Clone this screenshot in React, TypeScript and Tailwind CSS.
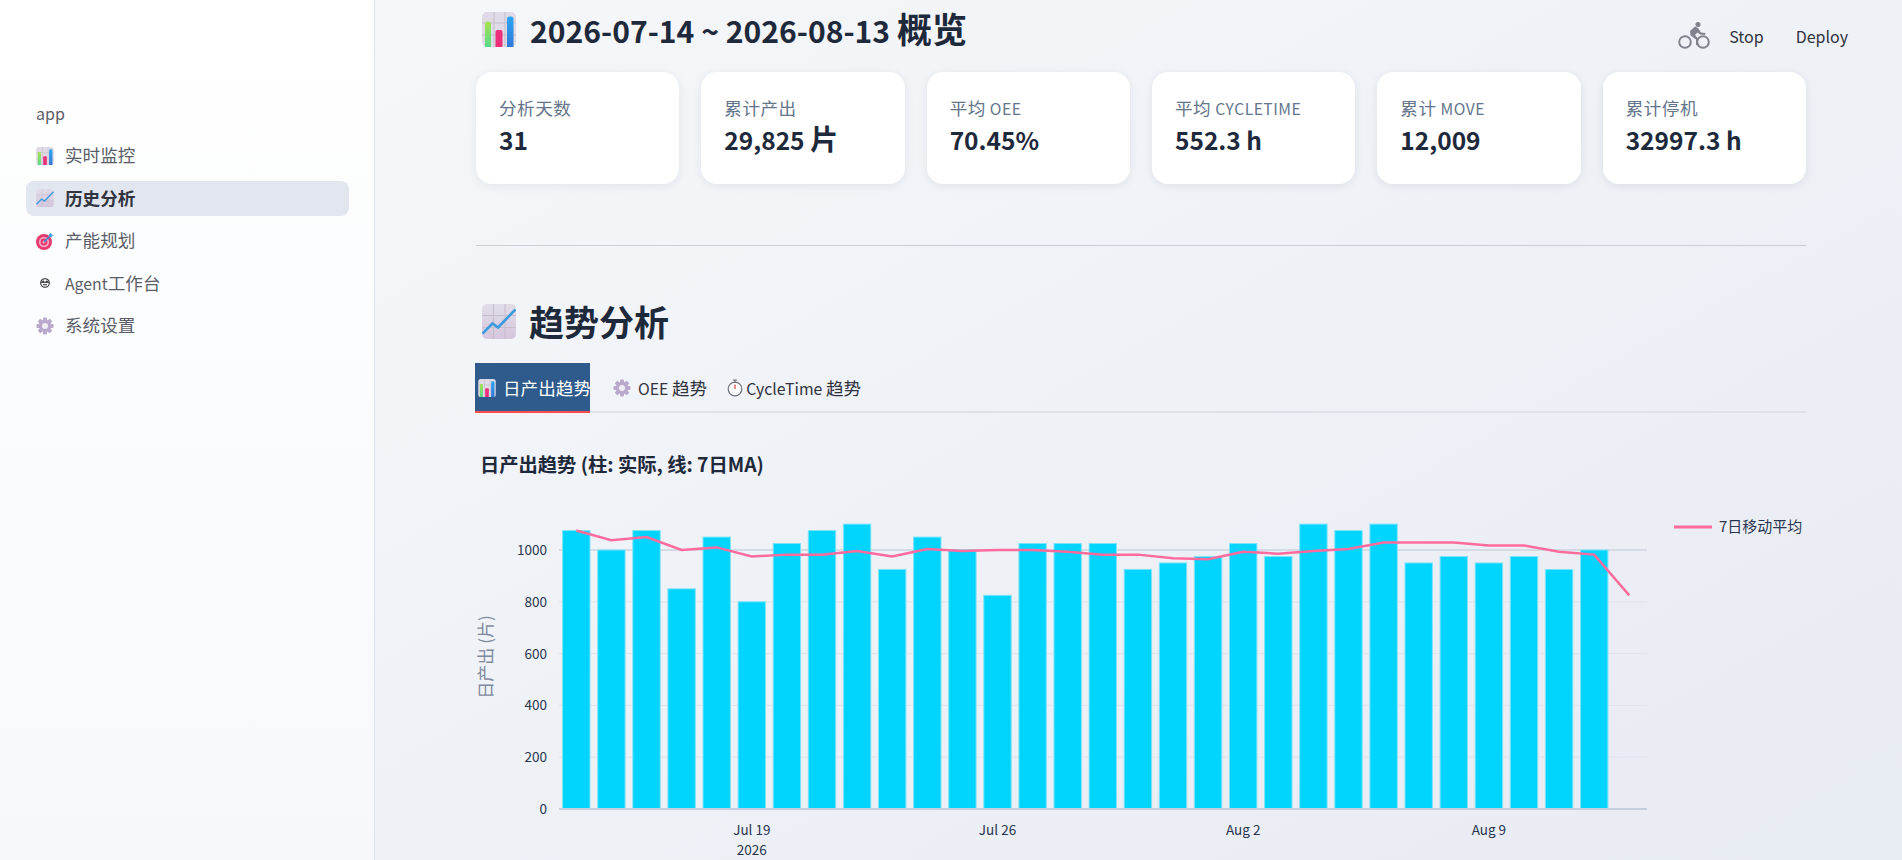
const FONT = "font-['Noto_Sans_CJK_SC','Noto_Sans',sans-serif]";

const output = [
  1075, 1000, 1075, 850, 1050, 800, 1025, 1075, 1100, 925, 1050, 1000, 825, 1025, 1025, 1025, 925, 950, 975, 1025,
  975, 1100, 1075, 1100, 950, 975, 950, 975, 925, 1000, 0,
];

const kpis = [
  { label: "分析天数", value: "31" },
  { label: "累计产出", value: "29,825 片" },
  { label: "平均 OEE", value: "70.45%" },
  { label: "平均 CycleTime", value: "552.3 h" },
  { label: "累计 Move", value: "12,009" },
  { label: "累计停机", value: "32997.3 h" },
];

// latin text runs smaller than the CJK around it
function Mixed({ text, latin = "text-[0.875em]" }: { text: string; latin?: string }) {
  return (
    <>
      {text.split(/([\u4e00-\u9fff]+)/).map((part, i) =>
        /[\u4e00-\u9fff]/.test(part) ? (
          <span key={i}>{part}</span>
        ) : (
          <span key={i} className={latin}>
            {part}
          </span>
        )
      )}
    </>
  );
}

function ChartEmoji({ className }: { className: string }) {
  return (
    <svg viewBox="0 0 34 35" className={className}>
      <defs>
        <linearGradient id="g-green" x1="0" y1="0" x2="0" y2="1">
          <stop offset="0" stopColor="#a8e24e" />
          <stop offset="1" stopColor="#58d98a" />
        </linearGradient>
        <linearGradient id="g-blue" x1="0" y1="0" x2="0" y2="1">
          <stop offset="0" stopColor="#2ba6f2" />
          <stop offset="1" stopColor="#3178d6" />
        </linearGradient>
      </defs>
      <rect width="34" height="35" rx="5" fill="#dfdae5" />
      <path d="M12 0v35M23 0v35M0 11h34M0 23h34" stroke="#c4bfca" strokeWidth="1" />
      <path d="M3 35V12q0-2.500 2.500-2.500h1q2.500 0 2.500 2.500v23z" fill="url(#g-green)" />
      <path d="M13.500 35V20q0-2 2-2h3q2 0 2 2v15z" fill="#ec2f78" />
      <path d="M25 35V7q0-2.500 2.500-2.500h1.500q2.500 0 2.500 2.500v28z" fill="url(#g-blue)" />
    </svg>
  );
}

function TrendEmoji({ className }: { className: string }) {
  return (
    <svg viewBox="0 0 34 35" className={className}>
      <defs>
        <linearGradient id="g-tile" x1="0" y1="0" x2="0" y2="1">
          <stop offset="0" stopColor="#e2dde7" />
          <stop offset="1" stopColor="#d4c6de" />
        </linearGradient>
      </defs>
      <rect width="34" height="35" rx="5" fill="url(#g-tile)" />
      <path d="M11.500 0v35M23 0v35M0 11.500h34M0 23.500h34" stroke="#c6bdcd" strokeWidth="1" />
      <path d="M0.500 29.500L10.500 19.500L16 23.500L33.500 5.500" fill="none" stroke="#3a9be0" strokeWidth="2.600" />
    </svg>
  );
}

function TargetEmoji() {
  return (
    <svg viewBox="0 0 18 18" className="h-[18px] w-[18px]">
      <circle cx="8" cy="10" r="8" fill="#e5396f" />
      <circle cx="8" cy="10" r="5.200" fill="#f4a7c0" />
      <circle cx="8" cy="10" r="3.400" fill="#e5396f" />
      <circle cx="8" cy="10" r="1.500" fill="#f4a7c0" />
      <path d="M8 10L15 3" stroke="#3d8fd8" strokeWidth="1.600" />
      <path d="M12.500 3L15 0.500L15.500 2.500L17.500 3L15 5.500Z" fill="#3fa3ea" />
    </svg>
  );
}

function GearEmoji({ className }: { className: string }) {
  return (
    <svg viewBox="0 0 18 18" className={className}>
      <g fill="#b9a9cc">
        <circle cx="9" cy="9" r="6.200" />
        {[0, 45, 90, 135, 180, 225, 270, 315].map((a) => (
          <rect key={a} x="7" y="0.500" width="4" height="4" rx="1" transform={`rotate(${a} 9 9)`} />
        ))}
      </g>
      <circle cx="9" cy="9" r="3" fill="#f0edf4" />
    </svg>
  );
}

function RobotGlyph() {
  return (
    <svg viewBox="0 0 18 18" className="h-[18px] w-[18px]">
      <circle cx="9" cy="9" r="4.300" fill="none" stroke="#26262c" strokeWidth="1.100" />
      <path d="M5.200 8.300h7.600M7 10.800h4" stroke="#26262c" strokeWidth="1.100" />
      <circle cx="7.200" cy="7.600" r="1" fill="#26262c" />
      <circle cx="10.800" cy="7.600" r="1" fill="#26262c" />
    </svg>
  );
}

function StopwatchEmoji() {
  return (
    <svg viewBox="0 0 16 18" className="h-[18px] w-4">
      <circle cx="8" cy="10" r="6.800" fill="#fafafa" stroke="#6b6f78" strokeWidth="1.200" />
      <path d="M6 1h4M8 1v2.500" stroke="#6b6f78" strokeWidth="1.200" />
      <path d="M8 10V5.500" stroke="#d2453d" strokeWidth="1.200" />
    </svg>
  );
}

function BikeIcon() {
  return (
    <svg viewBox="0 0 32 27" className="h-[27px] w-8" fill="#80838c">
      <circle cx="7" cy="20" r="5.800" fill="none" stroke="#80838c" strokeWidth="2" />
      <circle cx="25" cy="20" r="5.800" fill="none" stroke="#80838c" strokeWidth="2" />
      <circle cx="20" cy="2.500" r="2.500" />
      <path d="M12 9L17 4.500L20 6L23 10.500L27.500 11L27 13L22 12.500L19.500 10.500L17 13L20 16.500V23H18V17.500L12.500 13.500Z" />
    </svg>
  );
}

function SidebarItem({ icon, label, active }: { icon: React.ReactNode; label: string; active?: boolean }) {
  return (
    <div className={`flex h-[35px] items-center gap-[11px] rounded-lg px-[10px] text-[17.600px] ${active ? "bg-[#e2e6ef] font-bold text-[#31333f]" : "text-[#5a5d68]"}`}>
      <span className="flex w-[18px] justify-center">{icon}</span>
      <span>
        <Mixed text={label} latin="text-[0.9em]" />
      </span>
    </div>
  );
}

function TrendChart() {
  const y = (v: number) => 70 + (1000 - v) * 0.259;
  const x = (i: number) => 100.300 + i * 35.100;
  const ma = output.map((_, i) => {
    const win = output.slice(Math.max(0, i - 6), i + 1);
    return win.reduce((a, b) => a + b, 0) / win.length;
  });
  const grid = [1000, 800, 600, 400, 200];
  const ticks = [
    { i: 5, label: "Jul 19" },
    { i: 12, label: "Jul 26" },
    { i: 19, label: "Aug 2" },
    { i: 26, label: "Aug 9" },
  ];
  return (
    <svg viewBox="0 0 1400 380" className="h-[380px] w-[1400px] shrink-0 fill-[#2a3550] text-[13.500px]">
      {grid.map((g) => (
        <line key={g} x1="83" x2="1171" y1={y(g)} y2={y(g)} stroke={g === 1000 ? "#d5dbe5" : "#dfe3ea"} strokeWidth={g === 1000 ? 2 : 1} />
      ))}
      {[0, ...grid].map((g) => (
        <text key={g} x="71" y={y(g) + 5} textAnchor="end">
          {g}
        </text>
      ))}
      {output.slice(0, 30).map((v, i) => (
        <rect key={i} x={x(i) - 13.700} y={y(v)} width="27.400" height={v * 0.259} fill="#00d4ff" stroke="#7fe3fa" strokeWidth="1" />
      ))}
      <line x1="83" x2="1171" y1={y(0)} y2={y(0)} stroke="#c5cede" strokeWidth="2" />
      <polyline points={ma.map((v, i) => `${x(i)},${y(v)}`).join(" ")} fill="none" stroke="#ff6b9d" strokeWidth="2.500" />
      {ticks.map((t) => (
        <text key={t.label} x={x(t.i)} y={355} textAnchor="middle">
          {t.label}
        </text>
      ))}
      <text x={x(5)} y={375} textAnchor="middle">
        2026
      </text>
      <text transform="translate(16 177) rotate(-90)" textAnchor="middle" className="fill-[#7f8a9c] text-[17px]">
        日产出 (片)
      </text>
      <line x1="1198" x2="1236" y1="47" y2="47" stroke="#ff6b9d" strokeWidth="3" />
      <text x="1243" y="52" className="text-[15px]">
        7日移动平均
      </text>
    </svg>
  );
}

export default function App() {
  return (
    <div className={`${FONT} flex h-[860px] w-[1902px] overflow-hidden text-[#31333f]`}>
      <aside className="flex w-[375px] shrink-0 flex-col border-r border-[#dde3ec] bg-gradient-to-b from-white to-[#f6f8fb] pl-[26px] pr-[25px] pt-[101px]">
        <div className="mb-[13px] pl-[10px] text-[16px] leading-6 text-[#5a5d68]">app</div>
        <div className="flex flex-col gap-[7.500px]">
          <SidebarItem icon={<ChartEmoji className="h-[18px] w-[18px]" />} label="实时监控" />
          <SidebarItem icon={<TrendEmoji className="h-[18px] w-[18px]" />} label="历史分析" active />
          <SidebarItem icon={<TargetEmoji />} label="产能规划" />
          <SidebarItem icon={<RobotGlyph />} label="Agent工作台" />
          <SidebarItem icon={<GearEmoji className="h-[18px] w-[18px]" />} label="系统设置" />
        </div>
      </aside>

      <main className="relative min-w-0 flex-1 overflow-hidden bg-gradient-to-br from-[#f5f7fa] to-[#e7ebf2] pl-[101px] pr-[96px]">
        <div className="absolute right-[54px] top-[22px] flex items-center text-[16px]">
          <BikeIcon />
          <span className="ml-[19px]">Stop</span>
          <span className="ml-[32px]">Deploy</span>
        </div>

        <h2 className="flex h-[72px] items-start gap-[14px] pl-[6px] pt-[12px] text-[35px] font-semibold leading-[35px] text-[#1e293b]">
          <ChartEmoji className="h-[35px] w-[34px] shrink-0" />
          <span className="-mt-[2px]">
            <Mixed text="2026-07-14 ~ 2026-08-13 概览" latin="text-[0.86em]" />
          </span>
        </h2>

        <div className="grid grid-cols-6 items-start gap-[22px]">
          {kpis.map((k) => (
            <div key={k.label} className="rounded-2xl bg-white px-[23px] pb-[25px] pt-[24px] shadow-[0_2px_10px_rgba(30,41,59,0.08)]">
              <div className="text-[17.600px] uppercase leading-6 tracking-[0.5px] text-[#64748b]">
                <Mixed text={k.label} latin="text-[0.89em]" />
              </div>
              <div className="-mt-[2px] text-[28px] font-bold leading-[39px] text-[#1e293b]">
                <Mixed text={k.value} />
              </div>
            </div>
          ))}
        </div>

        <div className="mt-[61px] h-px bg-[#c9ced8]" />

        <h2 className="mt-[57px] flex items-center gap-[13px] pl-[6px] text-[35px] font-bold leading-[36px] text-[#1e293b]">
          <TrendEmoji className="h-[35px] w-[34px] shrink-0" />
          <span>趋势分析</span>
        </h2>

        <div className="mt-[24px] flex h-[50px] border-b-2 border-[#dfe2e8] text-[17.600px]">
          <div className="-mb-[2px] -ml-px flex h-[50px] w-[115px] items-center gap-[7px] overflow-hidden border-b-2 border-[#ff4b4b] bg-[#2e5a8c] pl-[3px] pt-[2px] text-white">
            <ChartEmoji className="h-[18px] w-[18px] shrink-0" />
            <span className="whitespace-nowrap">日产出趋势</span>
          </div>
          <div className="ml-[23px] flex items-center gap-[7px] pt-[2px]">
            <GearEmoji className="h-[18px] w-[18px]" />
            <span>
              <Mixed text="OEE 趋势" latin="text-[0.9em]" />
            </span>
          </div>
          <div className="ml-5 flex items-center gap-[3px] pt-[2px]">
            <StopwatchEmoji />
            <span>
              <Mixed text="CycleTime 趋势" latin="text-[0.9em]" />
            </span>
          </div>
        </div>

        <div className="mt-[37px] pl-[4px] text-[19.300px] font-bold leading-7 text-[#1e293b]">日产出趋势 (柱: 实际, 线: 7日MA)</div>

        <div className="mt-[2px] flex">
          <TrendChart />
        </div>
      </main>
    </div>
  );
}
